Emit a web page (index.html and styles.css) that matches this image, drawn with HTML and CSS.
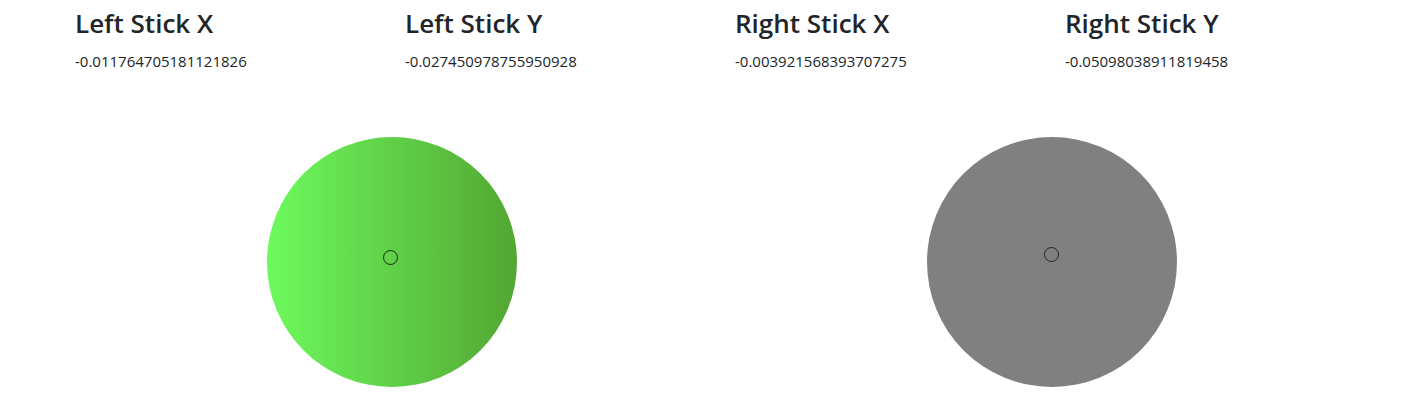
FILE: index.html
```html
<!DOCTYPE html>
<html>
<head>
<meta charset="utf-8">
<link rel="stylesheet" href="styles.css">
</head>
<body>
<div class="container">
  <div class="row">
    <div class="col">
      <h3 class="title">Left Stick X</h3>
      <p class="value">-0.011764705181121826</p>
    </div>
    <div class="col">
      <h3 class="title">Left Stick Y</h3>
      <p class="value">-0.027450978755950928</p>
    </div>
    <div class="col">
      <h3 class="title">Right Stick X</h3>
      <p class="value">-0.003921568393707275</p>
    </div>
    <div class="col">
      <h3 class="title">Right Stick Y</h3>
      <p class="value">-0.05098038911819458</p>
    </div>
  </div>
  <div class="row sticks">
    <div class="half">
      <div class="pad pad-active">
        <div class="dot dot-left"></div>
      </div>
    </div>
    <div class="half">
      <div class="pad pad-idle">
        <div class="dot dot-right"></div>
      </div>
    </div>
  </div>
</div>
</body>
</html>
```
FILE: styles.css
```css
html, body {
  margin: 0;
  padding: 0;
  background: #fff;
}
body {
  font-family: "Open Sans", "Noto Sans", sans-serif;
  color: #212529;
}
.container {
  width: 1320px;
  padding-left: 62px;
}
.row {
  display: flex;
}
.col {
  width: 330px;
  padding: 0 12px 0 13px;
  box-sizing: border-box;
}
.title {
  font-size: 26px;
  font-weight: 600;
  line-height: 1.2;
  margin: 8px 0 12px 0;
}
.value {
  font-size: 15px;
  line-height: 1.4;
  margin: 0;
}
.sticks {
  margin-top: 65px;
}
.half {
  width: 660px;
  display: flex;
  justify-content: center;
}
.pad {
  position: relative;
  width: 250px;
  height: 250px;
  border-radius: 50%;
}
.pad-active {
  background: linear-gradient(to right, #6dfa5d, #53a632);
}
.pad-idle {
  background: #808080;
}
.dot {
  position: absolute;
  width: 13px;
  height: 13px;
  border: 1px solid #222;
  border-radius: 50%;
}
.dot-left {
  left: 116px;
  top: 113px;
}
.dot-right {
  left: 117px;
  top: 110px;
}
```
